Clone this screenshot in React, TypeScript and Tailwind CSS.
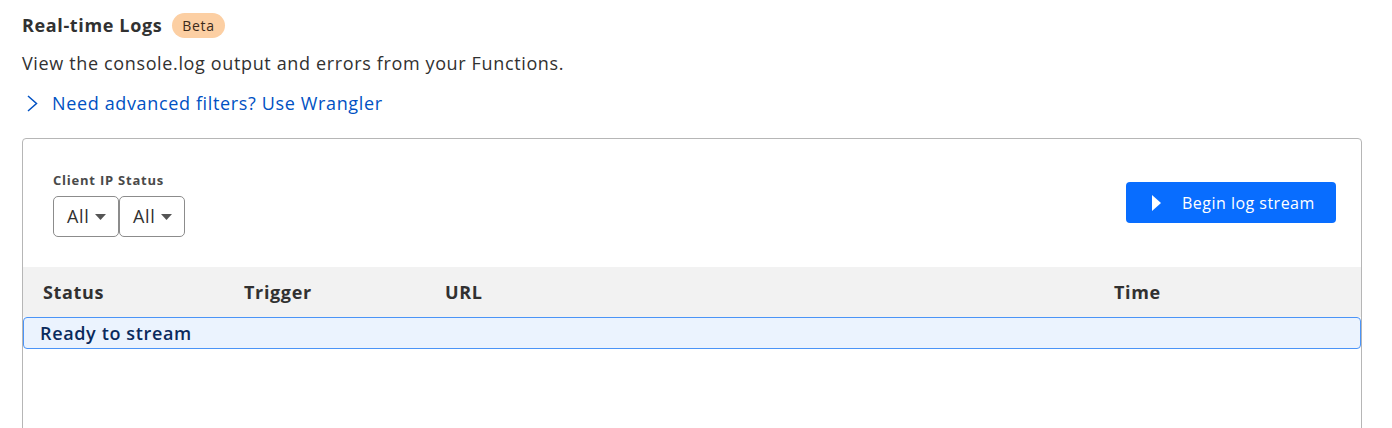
function Caret() {
  return (
    <svg width="11" height="6" viewBox="0 0 11 6" className="ml-[6px]">
      <path d="M0 0h11L5.5 6z" fill="#555" />
    </svg>
  );
}

function FilterSelect({ value }: { value: string }) {
  return (
    <button className="flex h-[41px] w-[66px] items-center rounded-[5px] border border-[#8c8c8c] bg-white pl-[13px] text-[18px] text-[#313131]">
      {value}
      <Caret />
    </button>
  );
}

export default function App() {
  return (
    <div className="min-h-screen bg-white pl-[22px] pr-[30px] pt-[13px] tracking-[0.04em] text-[#313131] [font-family:'Open_Sans','Noto_Sans',sans-serif]">
      {/* Header */}
      <div className="flex h-[25px] items-center gap-[10px]">
        <h2 className="text-[18px] font-bold leading-[25px]">Real-time Logs</h2>
        <span className="flex h-[25px] items-center rounded-full bg-[#fccfa3] px-[10px] text-[14px] text-[#3b2a1a]">
          Beta
        </span>
      </div>
      <p className="mt-[12px] text-[18px] leading-[27px]">View the console.log output and errors from your Functions.</p>
      <button className="mt-[13px] flex h-[27px] items-center text-[18px] leading-[27px] text-[#0051c3]">
        <svg width="12" height="17" viewBox="0 0 12 17" fill="none" className="ml-[5px] mr-[13px]">
          <path d="M1 1l8.5 7.5L1 16" stroke="currentColor" strokeWidth="1.5" />
        </svg>
        Need advanced filters? Use Wrangler
      </button>

      {/* Log panel */}
      <div className="mt-[21px] h-[320px] rounded-[4px] border border-[#b6b6b6]">
        <div className="flex items-start justify-between pl-[30px] pr-[25px] pt-[33px]">
          <div>
            <p className="text-[13px] font-bold leading-[16px] tracking-[0.06em] text-[#4a4a4a]">Client IP Status</p>
            <div className="mt-[8px] flex">
              <FilterSelect value="All" />
              <FilterSelect value="All" />
            </div>
          </div>
          <button className="mt-[10px] flex h-[41px] w-[210px] items-center rounded-[4px] bg-[#086dff] pl-[26px] text-[16px] tracking-[0.03em] text-white">
            <svg width="9" height="16" viewBox="0 0 9 16" className="mr-[21px]">
              <path d="M0 0l9 8-9 8z" fill="white" />
            </svg>
            Begin log stream
          </button>
        </div>

        <div className="mt-[30px] grid h-[50px] grid-cols-[201px_201px_669px_1fr] items-center bg-[#f2f2f2] pl-[20px] text-[18px] font-bold">
          <span>Status</span>
          <span>Trigger</span>
          <span>URL</span>
          <span>Time</span>
        </div>
        <div className="flex h-[32px] items-center rounded-[4px] border border-[#4b94f7] bg-[#ebf3fe] pl-[16px] text-[18px] font-semibold text-[#0a2a5c]">
          Ready to stream
        </div>
      </div>
    </div>
  );
}
